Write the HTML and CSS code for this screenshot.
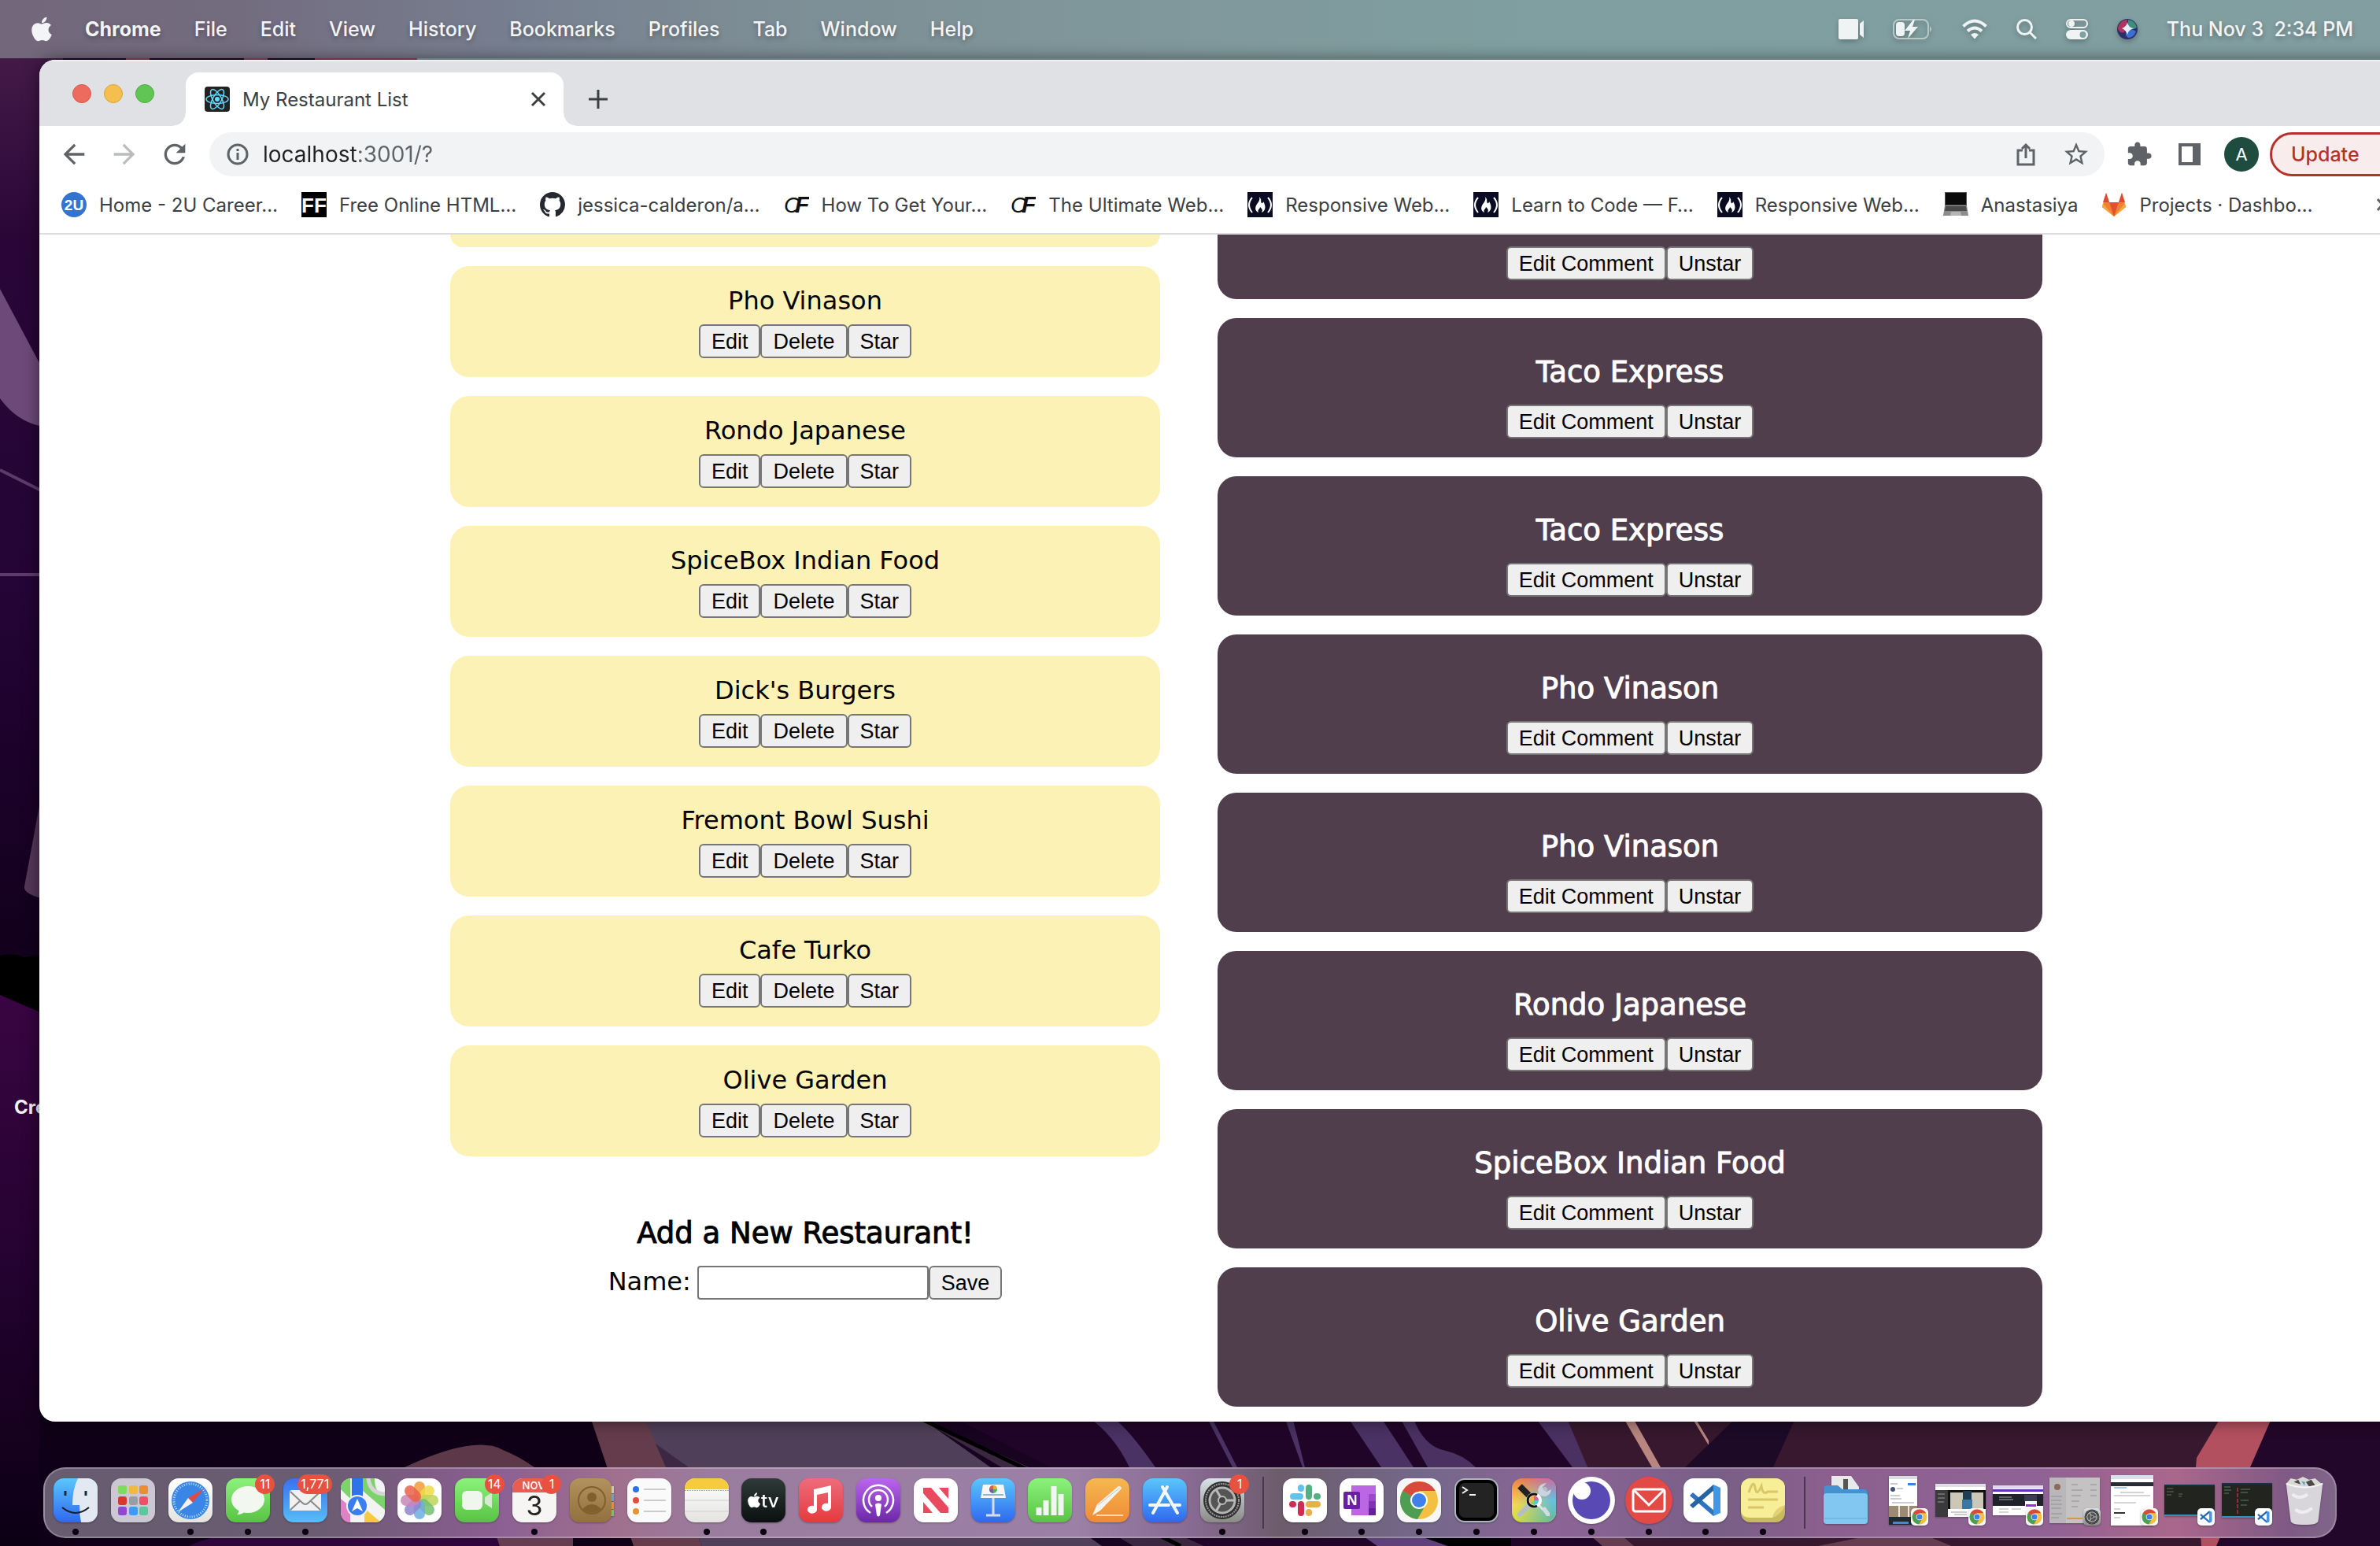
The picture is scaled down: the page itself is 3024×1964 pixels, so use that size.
FILE: index.html
```html
<!DOCTYPE html>
<html lang="en">
<head>
<meta charset="utf-8">
<title>My Restaurant List</title>
<link rel="stylesheet" href="styles.css">
</head>
<body>
<svg class="wallpaper" viewBox="0 0 3024 1964" preserveAspectRatio="none" aria-hidden="true">
  <defs>
    <linearGradient id="wl" x1="0" y1="0" x2="0" y2="1"><stop offset="0" stop-color="#431a47"/><stop offset=".2" stop-color="#2a0638"/><stop offset=".6" stop-color="#240436"/><stop offset="1" stop-color="#12001c"/></linearGradient>
    <linearGradient id="wg" x1="0" y1="0" x2="0" y2="1"><stop offset="0" stop-color="#390542"/><stop offset=".5" stop-color="#240230"/><stop offset="1" stop-color="#0c0014"/></linearGradient>
    <linearGradient id="blue" x1="0" y1="0" x2="0" y2="1"><stop offset="0" stop-color="#5bc6fb"/><stop offset="1" stop-color="#2f68ef"/></linearGradient>
    <linearGradient id="blueup" x1="0" y1="0" x2="0" y2="1"><stop offset="0" stop-color="#3a70ee"/><stop offset="1" stop-color="#57bdf8"/></linearGradient>
    <linearGradient id="green" x1="0" y1="0" x2="0" y2="1"><stop offset="0" stop-color="#8cf27c"/><stop offset="1" stop-color="#58c343"/></linearGradient>
    <linearGradient id="white" x1="0" y1="0" x2="0" y2="1"><stop offset="0" stop-color="#fff"/><stop offset="1" stop-color="#e4e3e0"/></linearGradient>
    <linearGradient id="red" x1="0" y1="0" x2="0" y2="1"><stop offset="0" stop-color="#ee6c7c"/><stop offset="1" stop-color="#e6393d"/></linearGradient>
    <linearGradient id="violet" x1="0" y1="0" x2="0" y2="1"><stop offset="0" stop-color="#bb66ec"/><stop offset="1" stop-color="#6c27a8"/></linearGradient>
    <linearGradient id="orange" x1="0" y1="0" x2="0" y2="1"><stop offset="0" stop-color="#f5b850"/><stop offset="1" stop-color="#f08a34"/></linearGradient>
    <linearGradient id="dark" x1="0" y1="0" x2="0" y2="1"><stop offset="0" stop-color="#2f3b38"/><stop offset="1" stop-color="#0b0f10"/></linearGradient>
    <linearGradient id="grey" x1="0" y1="0" x2="0" y2="1"><stop offset="0" stop-color="#d9e2e8"/><stop offset="1" stop-color="#8a8a86"/></linearGradient>
    <linearGradient id="brown" x1="0" y1="0" x2="0" y2="1"><stop offset="0" stop-color="#b2925d"/><stop offset="1" stop-color="#93703f"/></linearGradient>
    <linearGradient id="warm" x1="0" y1="0" x2="0" y2="1"><stop offset="0" stop-color="#ee8048"/><stop offset=".6" stop-color="#f4d84e"/><stop offset="1" stop-color="#c8dc48"/></linearGradient>
    <linearGradient id="cool" x1="0" y1="0" x2="0" y2="1"><stop offset="0" stop-color="#c86aa8"/><stop offset=".5" stop-color="#66c2dc"/><stop offset="1" stop-color="#6cb898"/></linearGradient>
    <linearGradient id="fade" x1="0" y1="0" x2="1" y2="0"><stop offset=".1" stop-color="#000"/><stop offset=".9" stop-color="#fff"/></linearGradient>
    <mask id="fade-mask"><rect width="56" height="56" fill="url(#fade)"/></mask>
    <symbol id="chrome-mark" viewBox="0 0 56 56">
      <rect width="56" height="56" rx="13" fill="#f7f7f7"/>
      <circle cx="28" cy="28" r="24" fill="#f3c044"/>
      <path d="M28 28 7.2 16A24 24 0 0 0 26 52l8-14z" fill="#4d9e53"/>
      <path d="M7.2 16a24 24 0 0 1 41.600 0H28v12z" fill="#d84b3c"/>
      <path d="M7.200 16 18 33l10-5z" fill="#4d9e53"/>
      <circle cx="28" cy="28" r="11" fill="#fff"/><circle cx="28" cy="28" r="9" fill="#4080ea"/>
    </symbol>
    <symbol id="code-mark" viewBox="0 0 56 56">
      <rect width="56" height="56" rx="13" fill="#fff"/>
      <path d="m8 22 4-4 28 24-2 6z" fill="#2f74c0"/><path d="m8 34 4 4 28-24-2-6z" fill="#2563a4"/>
      <path d="m38 8 9 4v32l-9 4z" fill="#4296e4"/>
    </symbol>
    <symbol id="gear-mark" viewBox="0 0 56 56">
      <rect width="56" height="56" rx="13" fill="url(#grey)"/>
      <circle cx="28" cy="28" r="24" fill="#303030"/>
      <circle cx="28" cy="28" r="21" fill="none" stroke="#999" stroke-width="2" stroke-dasharray="2 1"/>
      <circle cx="28" cy="28" r="16" fill="#555" stroke="#b5b5b5" stroke-width="3"/>
      <path d="M28 28h16M28 28l-8-14M28 28l-8 14" stroke="#bbb" stroke-width="3"/><circle cx="28" cy="28" r="5" fill="#444" stroke="#bbb" stroke-width="2"/>
    </symbol>
    <symbol id="camp-mark" viewBox="0 0 32 32">
      <rect width="32" height="32" fill="#0a0a23"/>
      <path d="M6 7q-8 9 0 19M26 7q8 9 0 19" fill="none" stroke="#fff" stroke-width="2"/>
      <path d="M15 6c4 4 1 6 3 8 1 1 2-1 2-2 4 6 3 12-2 14 2-4 0-5-2-7 0 3-4 3-2 7-6-3-4-8-1-12 2-3 3-5 2-8z" fill="#fff"/>
    </symbol>
  </defs>
  <rect width="3024" height="1964" fill="#180320"/>
  <rect y="74" width="80" height="1140" fill="url(#wl)"/>
  <path d="M0 367 50 461 80 500V541H50Q20 534 0 506z" fill="#6d4979"/>
  <path d="M0 597 60 627M0 730H60" stroke="#5f3b6c" stroke-width="4"/>
  <path d="M60 970 31 1126q-2 10 29 17z" fill="#54385a"/>
  <path d="M0 1214q20-4 30 2 15-4 40 0v80L0 1265z" fill="#000"/>
  <path d="M0 1264 70 1294V1964H0z" fill="url(#wg)"/>
  <path d="M400 74h130v4H400zM160 74h30v4h-30zM310 74h30v4h-30z" fill="#8b4558"/>
  <path d="M530 74H3024v4H530z" fill="#8aa6a8"/>
  <path d="M50 1790h800v174H50z" fill="#100017"/>
  <path d="M514 1864q90-42 125-22 20 8 40 22z" fill="#5d3848"/>
  <path d="M750 1800h70l72 164H805z" fill="#653c4b"/>
  <path d="M818 1800h350L1400 1964H892z" fill="#503f58"/>
  <path d="M833 1834 875 1864H846z" fill="#3c2844"/>
  <path d="M1165 1800 1530 1964H1440z" fill="#3b273f"/>
  <path d="M1165 1800 1299 1864 1500 1964" fill="none" stroke="#000" stroke-width="5"/>
  <path d="M1210 1800H2000L2100 1964H1530z" fill="#210529"/>
  <path d="M1382 1800h30q20 12 56 64h-33q-20-42-53-64zM1533 1800h6l33 64h-6zM1632 1800h10l16 64h-3zM1712 1800h42l42 64h-41z" fill="#4a3264"/>
  <path d="M1778 1800h17q14 38 42 43 22 5 38 21h-61zM1950 1800h38l52 64h-42z" fill="#4a3162"/>
  <path d="M1990 1800H2830L2820 1964H2060z" fill="#37182f"/>
  <path d="M2062 1800h12l36 64h-11zM2149 1800h4l18 30v6z" fill="#b8857f"/>
  <path d="M2207 1800h75l-29 64h-112z" fill="#1d0a26"/>
  <path d="M2822 1800H3024V1964H2800z" fill="#22072a"/>
  <path d="M2822 1800h65l-28 64-43 100h-19l-7-100 1-12z" fill="#b3505f"/>
  <path d="M240 1964q20-10 40-12h355v12z" fill="#2e063c"/><path d="M630 1950h98v14h-93zM2020 1950h40l16 14h-40zM2310 1964l60-12h80l30 12z" fill="#643e50"/>
  <path d="M1730 1950h70l40 14h-90z" fill="#60407a"/><path d="M1800 1950h120v14h-80z" fill="#000"/>
</svg>
<p class="desktop-label">Cre</p>

<header class="menubar">
  <nav class="menus">
    <svg class="apple" viewBox="0 28 384 456" fill="currentColor"><path d="M318.700 268.700c-.2-36.700 16.400-64.400 50-84.800-18.800-26.900-47.200-41.700-84.700-44.600-35.500-2.800-74.300 20.700-88.500 20.700-15 0-49.400-19.700-76.400-19.700C63.300 141.200 4 184.800 4 273.500q0 39.300 14.400 81.200c12.800 36.700 59 126.700 107.200 125.200 25.200-.6 43-17.900 75.800-17.900 31.800 0 48.300 17.900 76.400 17.900 48.600-.7 90.400-82.500 102.600-119.300-65.200-30.700-61.700-90-61.700-91.900zm-56.600-164.200c27.300-32.400 24.800-61.900 24-72.500-24.100 1.400-52 16.400-67.900 34.900-17.500 19.800-27.800 44.300-25.600 71.900 26.100 2 49.900-11.400 69.500-34.300z"/></svg>
    <button class="menu menu-app">Chrome</button>
    <button class="menu">File</button>
    <button class="menu">Edit</button>
    <button class="menu">View</button>
    <button class="menu">History</button>
    <button class="menu">Bookmarks</button>
    <button class="menu">Profiles</button>
    <button class="menu">Tab</button>
    <button class="menu">Window</button>
    <button class="menu">Help</button>
  </nav>
  <div class="status">
    <svg width="32" height="26" viewBox="0 0 32 26" fill="#f0f3f3"><rect width="25" height="26" rx="2"/><path d="M27 6l5-4v22l-5-4z"/></svg>
    <svg width="51" height="26" viewBox="0 0 51 26"><rect x="1" y="1" width="44" height="24" rx="7" fill="none" stroke="#b9c8c9" stroke-width="2"/><path d="M47 9q4 4 0 8z" fill="#b9c8c9"/><rect x="4" y="4" width="11" height="18" rx="4" fill="#f0f3f3"/><path d="M26 1 15 15h7l-3 10 13-15h-7l3-9z" fill="#f0f3f3"/></svg>
    <svg width="32" height="26" viewBox="0 0 32 26" fill="none" stroke="#f0f3f3" stroke-width="4"><path d="M1.500 9.500q14.500-14 29 0M7 15.500q9-8 18 0"/><path d="M11 20q5-4 10 0l-5 5.500z" fill="#f0f3f3" stroke="none"/></svg>
    <svg width="26" height="26" viewBox="0 0 26 26" fill="none" stroke="#f0f3f3" stroke-width="3"><circle cx="10.500" cy="10.500" r="9"/><path d="m17 17 8 8"/></svg>
    <svg width="28" height="26" viewBox="0 0 28 26"><rect x="1" y="1" width="26" height="10" rx="5" fill="none" stroke="#f0f3f3" stroke-width="2"/><circle cx="7" cy="6" r="4" fill="#f0f3f3"/><rect y="14" width="28" height="12" rx="6" fill="#f0f3f3"/><circle cx="21.500" cy="20" r="4" fill="#7f9fa0"/></svg>
    <svg width="26" height="26" viewBox="0 0 26 26"><circle cx="13" cy="13" r="13" fill="#2a2f6a"/><path d="M1 12A12 12 0 0 1 13 1q-1 9-4 16-6 2-8-5z" fill="#b0345e"/><path d="M14 1a12 12 0 0 1 11 10q-6 4-11 2z" fill="#3f8d7c"/><path d="M14 14q7-1 10 2-3 8-10 8-6-4 0-10z" fill="#3d6fd0"/><path d="M13 4q1 7 8 8-7 2-8 8-2-6-7-8 6-2 7-8z" fill="#e6eefa"/></svg>
    <time class="clock">Thu Nov 3&nbsp; 2:34 PM</time>
  </div>
</header>

<main class="window">
  <div class="tabstrip">
    <div class="lights"><span class="light light-close"></span><span class="light light-min"></span><span class="light light-max"></span></div>
    <div class="tab">
      <svg width="32" height="32" viewBox="0 0 32 32"><rect width="32" height="32" rx="4" fill="#222"/><g fill="none" stroke="#61dafb" stroke-width="1.500"><ellipse cx="16" cy="16" rx="14" ry="5.500"/><ellipse cx="16" cy="16" rx="14" ry="5.500" transform="rotate(60 16 16)"/><ellipse cx="16" cy="16" rx="14" ry="5.500" transform="rotate(120 16 16)"/></g><circle cx="16" cy="16" r="3" fill="#61dafb"/></svg>
      <span class="tab-title">My Restaurant List</span>
      <button class="icon-button tab-close" aria-label="Close tab"><svg width="24" height="24" viewBox="0 0 24 24" stroke="#3c4043" stroke-width="3"><path d="m4 4 16 16M20 4 4 20"/></svg></button>
    </div>
    <button class="icon-button new-tab" aria-label="New tab"><svg width="24" height="24" viewBox="0 0 24 24" stroke="#3c4043" stroke-width="3"><path d="M12 0v24M0 12h24"/></svg></button>
    <button class="icon-button tab-search" aria-label="Search tabs"><svg width="24" height="24" viewBox="0 0 24 24" fill="none" stroke="#3c4043" stroke-width="4"><path d="m3 8 9 9 9-9"/></svg></button>
  </div>

  <div class="toolbar">
    <button class="icon-button" aria-label="Back"><svg width="40" height="40" viewBox="0 0 24 24" fill="#5f6368"><path d="M20 11H7.830l5.590-5.590L12 4l-8 8 8 8 1.410-1.410L7.830 13H20v-2z"/></svg></button>
    <button class="icon-button" aria-label="Forward"><svg width="40" height="40" viewBox="0 0 24 24" fill="#babcbe"><path d="M4 11h12.170l-5.590-5.590L12 4l8 8-8 8-1.410-1.410L16.170 13H4v-2z"/></svg></button>
    <button class="icon-button" aria-label="Reload"><svg width="40" height="40" viewBox="0 0 24 24" fill="#5f6368"><path d="M17.650 6.350C16.200 4.900 14.210 4 12 4c-4.420 0-7.990 3.580-7.990 8s3.570 8 7.990 8c3.730 0 6.840-2.550 7.730-6h-2.080c-.82 2.330-3.040 4-5.650 4-3.310 0-6-2.690-6-6s2.690-6 6-6c1.660 0 3.140.69 4.220 1.780L13 11h7V4l-2.350 2.350z"/></svg></button>
    <div class="omnibox">
      <svg width="28" height="28" viewBox="0 0 28 28" fill="none" stroke="#5f6368" stroke-width="3"><circle cx="14" cy="14" r="12"/><path d="M14 12v9M14 7v3"/></svg>
      <input class="address" type="text" value="localhost:3001/?" aria-label="Address">
      <svg width="24" height="30" viewBox="0 0 24 30" fill="none" stroke="#5f6368" stroke-width="3"><path d="M8 10H2v18h20V10h-6M12 20V3M7 8l5-5 5 5"/></svg>
      <svg width="36" height="36" viewBox="0 0 24 24" fill="#5f6368"><path d="M22 9.240l-7.190-.62L12 2 9.190 8.630 2 9.240l5.460 4.730L5.820 21 12 17.270 18.180 21l-1.630-7.030L22 9.240zM12 15.400l-3.760 2.270 1-4.280-3.320-2.880 4.380-.38L12 6.100l1.710 4.040 4.380.38-3.320 2.880 1 4.280L12 15.400z"/></svg>
    </div>
    <button class="icon-button" aria-label="Extensions"><svg width="34" height="34" viewBox="0 0 24 24" fill="#5f6368"><path d="M20.500 11H19V7c0-1.100-.9-2-2-2h-4V3.500C13 2.120 11.880 1 10.500 1S8 2.120 8 3.500V5H4c-1.100 0-1.990.9-1.990 2v3.800H3.500c1.490 0 2.700 1.210 2.700 2.700s-1.210 2.700-2.700 2.700H2V20c0 1.100.9 2 2 2h3.800v-1.500c0-1.490 1.210-2.700 2.700-2.700 1.490 0 2.700 1.210 2.700 2.700V22H17c1.100 0 2-.9 2-2v-4h1.500c1.380 0 2.500-1.120 2.500-2.500S21.880 11 20.500 11z"/></svg></button>
    <button class="icon-button" aria-label="Side panel"><svg width="28" height="28" viewBox="0 0 28 28"><path d="M0 0h28v28H0zM4 4v20h14V4z" fill="#5f6368" fill-rule="evenodd"/></svg></button>
    <div class="account">
      <span class="avatar">A</span>
      <button class="update">Update</button>
    </div>
  </div>

  <nav class="bookmarks">
    <a class="bookmark" href="#"><svg width="32" height="32" viewBox="0 0 32 32"><circle cx="16" cy="16" r="16" fill="#3374d0"/><text x="16" y="23" text-anchor="middle" class="mark-2u">2U</text></svg>Home - 2U Career…</a>
    <a class="bookmark" href="#"><svg width="32" height="32" viewBox="0 0 32 32"><rect width="32" height="32" fill="#000"/><text x="16" y="26" text-anchor="middle" class="mark-ff">FF</text></svg>Free Online HTML…</a>
    <a class="bookmark" href="#"><svg width="32" height="32" viewBox="0 0 16 16" fill="#24292f"><path d="M8 0C3.580 0 0 3.580 0 8c0 3.540 2.290 6.530 5.470 7.590.4.070.55-.17.55-.38 0-.19-.01-.82-.01-1.490-2.010.37-2.530-.49-2.690-.94-.09-.23-.48-.94-.82-1.130-.28-.15-.68-.52-.01-.53.63-.01 1.080.58 1.230.82.72 1.210 1.870.87 2.330.66.070-.52.28-.87.51-1.070-1.780-.2-3.640-.89-3.640-3.950 0-.87.31-1.590.82-2.150-.08-.2-.36-1.020.08-2.120 0 0 .67-.21 2.200.82.64-.18 1.320-.27 2-.27s1.360.09 2 .27c1.530-1.040 2.200-.82 2.200-.82.44 1.100.16 1.920.08 2.120.51.56.82 1.270.82 2.150 0 3.070-1.870 3.750-3.650 3.950.29.25.54.73.54 1.480 0 1.070-.01 1.930-.01 2.200 0 .21.15.46.55.38A8.010 8.010 0 0 0 16 8c0-4.420-3.580-8-8-8z"/></svg>jessica-calderon/a…</a>
    <a class="bookmark" href="#"><svg width="32" height="32" viewBox="0 0 32 32"><text x="0" y="26" class="mark-c">C</text><text x="14" y="26" class="mark-f">F</text></svg>How To Get Your…</a>
    <a class="bookmark" href="#"><svg width="32" height="32" viewBox="0 0 32 32"><text x="0" y="26" class="mark-c">C</text><text x="14" y="26" class="mark-f">F</text></svg>The Ultimate Web…</a>
    <a class="bookmark" href="#"><svg width="32" height="32"><use href="#camp-mark"/></svg>Responsive Web…</a>
    <a class="bookmark" href="#"><svg width="32" height="32"><use href="#camp-mark"/></svg>Learn to Code — F…</a>
    <a class="bookmark" href="#"><svg width="32" height="32"><use href="#camp-mark"/></svg>Responsive Web…</a>
    <a class="bookmark" href="#"><svg width="32" height="32" viewBox="0 0 32 32"><path d="M2 0h28v17H2z" fill="#555"/><path d="M3 1h26v15H3z" fill="#0a0a0a"/><path d="M2 17h28l2 13H0z" fill="#8c8c8c"/><path d="M3 18h26l1 6H2z" fill="#4a4a4a"/><path d="M10 25h12l1 5H9z" fill="#b4b4b4"/></svg>Anastasiya</a>
    <a class="bookmark" href="#"><svg width="32" height="32" viewBox="0 0 32 32"><path d="M16 31 1 19 6 1l4 12h12L26 1l5 18z" fill="#ef8034"/><path d="m16 31-6-18h12z" fill="#e2502f"/><path d="M6 1l4 12H2zM26 1l-4 12h8z" fill="#dd4b33"/><path d="M16 31 1 19l1-5zM16 31l15-12-1-5z" fill="#f3a63b"/></svg>Projects · Dashbo…</a>
    <button class="icon-button more" aria-label="More bookmarks"><svg width="16" height="20" viewBox="0 0 16 20" fill="none" stroke="#5f6368" stroke-width="3"><path d="m1 3 6 7-6 7M8 3l6 7-6 7"/></svg></button>
  </nav>

  <div class="page">
    <section class="column">
      <div class="card card-tail"></div>
      <article class="card"><p class="name">Pho Vinason</p><div class="actions"><button class="btn">Edit</button><button class="btn">Delete</button><button class="btn">Star</button></div></article>
      <article class="card"><p class="name">Rondo Japanese</p><div class="actions"><button class="btn">Edit</button><button class="btn">Delete</button><button class="btn">Star</button></div></article>
      <article class="card"><p class="name">SpiceBox Indian Food</p><div class="actions"><button class="btn">Edit</button><button class="btn">Delete</button><button class="btn">Star</button></div></article>
      <article class="card"><p class="name">Dick's Burgers</p><div class="actions"><button class="btn">Edit</button><button class="btn">Delete</button><button class="btn">Star</button></div></article>
      <article class="card"><p class="name">Fremont Bowl Sushi</p><div class="actions"><button class="btn">Edit</button><button class="btn">Delete</button><button class="btn">Star</button></div></article>
      <article class="card"><p class="name">Cafe Turko</p><div class="actions"><button class="btn">Edit</button><button class="btn">Delete</button><button class="btn">Star</button></div></article>
      <article class="card"><p class="name">Olive Garden</p><div class="actions"><button class="btn">Edit</button><button class="btn">Delete</button><button class="btn">Star</button></div></article>
      <form class="add">
        <h3 class="heading">Add a New Restaurant!</h3>
        <div class="field"><label for="name">Name:</label><input class="textbox" id="name" type="text"><button class="btn" type="button">Save</button></div>
      </form>
    </section>
    <section class="column">
      <article class="card starred starred-tail"><div class="actions"><button class="btn">Edit Comment</button><button class="btn">Unstar</button></div></article>
      <article class="card starred"><h3 class="heading">Taco Express</h3><div class="actions"><button class="btn">Edit Comment</button><button class="btn">Unstar</button></div></article>
      <article class="card starred"><h3 class="heading">Taco Express</h3><div class="actions"><button class="btn">Edit Comment</button><button class="btn">Unstar</button></div></article>
      <article class="card starred"><h3 class="heading">Pho Vinason</h3><div class="actions"><button class="btn">Edit Comment</button><button class="btn">Unstar</button></div></article>
      <article class="card starred"><h3 class="heading">Pho Vinason</h3><div class="actions"><button class="btn">Edit Comment</button><button class="btn">Unstar</button></div></article>
      <article class="card starred"><h3 class="heading">Rondo Japanese</h3><div class="actions"><button class="btn">Edit Comment</button><button class="btn">Unstar</button></div></article>
      <article class="card starred"><h3 class="heading">SpiceBox Indian Food</h3><div class="actions"><button class="btn">Edit Comment</button><button class="btn">Unstar</button></div></article>
      <article class="card starred"><h3 class="heading">Olive Garden</h3><div class="actions"><button class="btn">Edit Comment</button><button class="btn">Unstar</button></div></article>
    </section>
  </div>
</main>

<footer class="dock">
  <div class="apps apps-main">
    <div class="app open"><svg viewBox="0 0 56 56"><rect width="56" height="56" rx="13" fill="url(#blue)"/><path d="M31 0h12a13 13 0 0 1 13 13v30a13 13 0 0 1-13 13h-8q-2-10-2-22h-9Q24 14 31 0z" fill="#e3e9f2"/><path d="M15 16v6M41 16v6" stroke="#1b2a3a" stroke-width="3"/><path d="M11 37q17 14 34 0" fill="none" stroke="#1b1b22" stroke-width="2"/></svg></div>
    <div class="app"><svg viewBox="0 0 56 56"><rect width="56" height="56" rx="13" fill="#cbc7d3"/><rect x="9" y="9" width="11" height="11" rx="3" fill="#7fdb5f"/><rect x="23" y="9" width="11" height="11" rx="3" fill="#f3b93c"/><rect x="36" y="9" width="11" height="11" rx="3" fill="#ea8d34"/><rect x="9" y="23" width="11" height="11" rx="3" fill="#d8372c"/><rect x="23" y="23" width="11" height="11" rx="3" fill="#9a9ea2"/><rect x="36" y="23" width="11" height="11" rx="3" fill="#ef5068"/><rect x="9" y="36" width="11" height="11" rx="3" fill="#9148cc"/><rect x="23" y="36" width="11" height="11" rx="3" fill="#3a9cf2"/><rect x="36" y="36" width="11" height="11" rx="3" fill="#5cc79a"/></svg></div>
    <div class="app open"><svg viewBox="0 0 56 56"><rect width="56" height="56" rx="13" fill="url(#white)"/><circle cx="28" cy="28" r="24" fill="#3a86e6"/><circle cx="28" cy="28" r="21" fill="none" stroke="#bfe0fb" stroke-width="3" stroke-dasharray="1 2"/><path d="M45 13 31 31l-6-6z" fill="#e5483c"/><path d="M12 43 25 25l6 6z" fill="#f3f3f3"/></svg></div>
    <div class="app open"><svg viewBox="0 0 56 56"><rect width="56" height="56" rx="13" fill="url(#green)"/><ellipse cx="28" cy="27" rx="21" ry="17" fill="#f2f8f0"/><path d="M17 38q0 6-3 8 8 0 11-5z" fill="#f2f8f0"/></svg><span class="badge">11</span></div>
    <div class="app open"><svg viewBox="0 0 56 56"><rect width="56" height="56" rx="13" fill="url(#blueup)"/><rect x="8" y="15" width="40" height="26" rx="3" fill="#f1f1f1"/><path d="m9 17 15 14q4 4 8 0l15-14M9 40l13-12M47 40 34 28" fill="none" stroke="#8a8a8a" stroke-width="2"/></svg><span class="badge">1,771</span></div>
    <div class="app"><svg viewBox="0 0 56 56"><rect width="56" height="56" rx="13" fill="#f3f3f3"/><path d="M0 13A13 13 0 0 1 12 0v26L0 14zM28 0h15q0 20 13 22v18L28 16z" fill="#7cd36c"/><path d="M0 26l12 10v20Q1 56 0 43z" fill="#df82c4"/><path d="M14 0h14v30H14z" fill="#2f73e8"/><path d="M30 38 50 55q-4 1-8 1H30z" fill="#f6c944"/><path d="M35 0q2 19 21 20" fill="none" stroke="#d5d5d5" stroke-width="5"/><circle cx="21" cy="35" r="14" fill="#f3f3f3"/><circle cx="21" cy="35" r="12" fill="#3a7df0"/><path d="m21 26 7 16-7-4-7 4z" fill="#fff"/></svg></div>
    <div class="app"><svg viewBox="0 0 56 56"><rect width="56" height="56" rx="13" fill="#fff"/><g fill-opacity=".85"><rect x="21" y="4" width="14" height="24" rx="7" fill="#f19a37"/><rect x="21" y="4" width="14" height="24" rx="7" fill="#efdc45" transform="rotate(45 28 28)"/><rect x="21" y="4" width="14" height="24" rx="7" fill="#bcd65a" transform="rotate(90 28 28)"/><rect x="21" y="4" width="14" height="24" rx="7" fill="#74bf70" transform="rotate(135 28 28)"/><rect x="21" y="4" width="14" height="24" rx="7" fill="#6daee0" transform="rotate(180 28 28)"/><rect x="21" y="4" width="14" height="24" rx="7" fill="#8d86cf" transform="rotate(225 28 28)"/><rect x="21" y="4" width="14" height="24" rx="7" fill="#c985b8" transform="rotate(270 28 28)"/><rect x="21" y="4" width="14" height="24" rx="7" fill="#ea604a" transform="rotate(315 28 28)"/></g></svg></div>
    <div class="app"><svg viewBox="0 0 56 56"><rect width="56" height="56" rx="13" fill="url(#green)"/><rect x="9" y="16" width="26" height="24" rx="6" fill="#eff7ed"/><path d="M38 24l9-6v20l-9-6z" fill="#d5ebd0"/></svg><span class="badge">14</span></div>
    <div class="app open"><svg viewBox="0 0 56 56"><rect width="56" height="56" rx="13" fill="#f6f5f3"/><path d="M0 18v-5A13 13 0 0 1 13 0h30a13 13 0 0 1 13 13v5z" fill="#e75d52"/><text x="27" y="14" text-anchor="middle" class="cal-month">NOV</text><text x="28" y="47" text-anchor="middle" class="cal-day">3</text></svg><span class="badge">1</span></div>
    <div class="app"><svg viewBox="0 0 56 56"><path d="M50 10h6v9h-6z" fill="#c9c5b8"/><path d="M50 20h6v9h-6z" fill="#55a7dc"/><path d="M50 30h6v9h-6z" fill="#e98b35"/><path d="M50 40h6v8h-6z" fill="#6cc85e"/><rect width="53" height="56" rx="12" fill="url(#brown)"/><circle cx="28" cy="28" r="17" fill="none" stroke="#80602f" stroke-width="2"/><circle cx="28" cy="24" r="6" fill="#80602f"/><path d="M16 39q12-12 24 0-12 10-24 0z" fill="#80602f"/></svg></div>
    <div class="app"><svg viewBox="0 0 56 56"><rect width="56" height="56" rx="13" fill="#fbfafa"/><path d="M21 14h28M21 28h28M21 42h28" stroke="#bdbdbd" stroke-width="1.500"/><circle cx="11" cy="14" r="4" fill="#2f6fe8"/><circle cx="11" cy="28" r="4" fill="#e64a3c"/><circle cx="11" cy="42" r="4" fill="#e99432"/></svg></div>
    <div class="app open"><svg viewBox="0 0 56 56"><rect width="56" height="56" rx="13" fill="url(#white)"/><path d="M0 14v-1A13 13 0 0 1 13 0h30a13 13 0 0 1 13 13v1z" fill="#f7cb3e"/><path d="M0 15.500h56" stroke="#b5b1a5" stroke-dasharray="2 1"/><path d="M0 28h56M0 42h56" stroke="#d2d0ca"/></svg></div>
    <div class="app open"><svg viewBox="0 0 56 56"><rect width="56" height="56" rx="13" fill="url(#dark)"/><path transform="translate(8 17) scale(.042)" d="M318.700 268.700c-.2-36.700 16.400-64.400 50-84.800-18.800-26.900-47.200-41.700-84.700-44.600-35.500-2.800-74.300 20.700-88.500 20.700-15 0-49.400-19.700-76.400-19.700C63.300 141.200 4 184.800 4 273.500q0 39.300 14.400 81.200c12.800 36.700 59 126.700 107.200 125.200 25.200-.6 43-17.900 75.800-17.900 31.800 0 48.300 17.900 76.400 17.900 48.600-.7 90.400-82.500 102.600-119.300-65.200-30.700-61.700-90-61.700-91.900zm-56.600-164.200c27.300-32.400 24.800-61.900 24-72.500-24.100 1.400-52 16.400-67.900 34.900-17.500 19.800-27.800 44.300-25.600 71.900 26.100 2 49.900-11.400 69.500-34.300z" fill="#fff"/><text x="25" y="37" class="tv-text">tv</text></svg></div>
    <div class="app"><svg viewBox="0 0 56 56"><rect width="56" height="56" rx="13" fill="url(#red)"/><path d="M19 14 41 9v28a6 5 0 1 1-4-5V18l-14 3v19a6 5 0 1 1-4-5z" fill="#fff"/></svg></div>
    <div class="app"><svg viewBox="0 0 56 56"><rect width="56" height="56" rx="13" fill="url(#violet)"/><g fill="none" stroke="#fff" stroke-width="2.500"><path d="M18 44a19 19 0 1 1 20 0M20 36a12 12 0 1 1 16 0"/></g><circle cx="28" cy="25" r="4" fill="#fff"/><path d="M24 33q4-3 8 0l-2 14q-2 3-4 0z" fill="#fff"/></svg></div>
    <div class="app"><svg viewBox="0 0 56 56"><rect width="56" height="56" rx="13" fill="#fff"/><path d="M12 12h10l22 25v7H34L12 19zM32 12h12v14zM12 30v14h12z" fill="#e94a5f"/></svg></div>
    <div class="app"><svg viewBox="0 0 56 56"><rect width="56" height="56" rx="13" fill="url(#blue)"/><path d="M15 8h26l3 17H12z" fill="#f4f6f8"/><path d="M28 25v22M19 47h18" stroke="#d7dde5" stroke-width="3"/><path d="M15 21h26" stroke="#9db4c8" stroke-width="2"/><circle cx="28" cy="14" r="5" fill="#56b05a"/><path d="M28 14V9a5 5 0 0 0-5 5z" fill="#e9544c"/><path d="M28 14v5a5 5 0 0 1-5-5z" fill="#8a4bbf"/><path d="M28 14V9a5 5 0 0 1 5 5z" fill="#f0a63a"/></svg></div>
    <div class="app"><svg viewBox="0 0 56 56"><rect width="56" height="56" rx="13" fill="url(#green)"/><path d="M14 47V37M23 47V28M33 47V10M42 47V20" stroke="#f2f6f0" stroke-width="7"/></svg></div>
    <div class="app"><svg viewBox="0 0 56 56"><rect width="56" height="56" rx="13" fill="url(#orange)"/><path d="m9 47 6-14L42 10q4 0 4 3L19 41z" fill="#f5f3ef"/><path d="M16 34 44 12" stroke="#c9c5bd"/><path d="M14 47h34" stroke="#fbd8a8" stroke-width="2"/></svg></div>
    <div class="app"><svg viewBox="0 0 56 56"><rect width="56" height="56" rx="13" fill="url(#blue)"/><path d="m25 11 19 33M31 11 13 44M9 34h24M39 34h8" stroke="#f4f7fb" stroke-width="4" stroke-linecap="round"/></svg></div>
    <div class="app open"><svg><use href="#gear-mark"/></svg><span class="badge">1</span></div>
  </div>
  <span class="divider"></span>
  <div class="apps">
    <div class="app open"><svg viewBox="0 0 56 56"><rect width="56" height="56" rx="13" fill="#fff"/><g stroke-width="8" stroke-linecap="round"><path d="M13 23h9M23 12v1" stroke="#62c3ea"/><path d="M33 12v11M43 23h1" stroke="#54b082"/><path d="M33 33h11M33 43v1" stroke="#e3b349"/><path d="M23 33v11M12 33h1" stroke="#d02c56"/></g></svg></div>
    <div class="app open"><svg viewBox="0 0 56 56"><rect width="56" height="56" rx="13" fill="#fff"/><path d="M15 9h31v38H15z" fill="#bb66e2"/><path d="M37 20h9v9h-9z" fill="#9b48cc"/><path d="M37 29h9v9h-9z" fill="#7e32b4"/><path d="M37 38h9v9h-9z" fill="#66209a"/><rect x="5" y="17" width="21" height="22" rx="2" fill="#6a1fa5"/><text x="16" y="34" text-anchor="middle" class="note-text">N</text></svg></div>
    <div class="app open"><svg><use href="#chrome-mark"/></svg></div>
    <div class="app open"><svg viewBox="0 0 56 56"><rect width="56" height="56" rx="13" fill="#a9b6bd"/><rect x="2" y="2" width="52" height="52" rx="11" fill="#000"/><rect x="6" y="6" width="44" height="44" rx="7" fill="#232323"/><path d="m10 11 6 4-6 4M19 21h8" fill="none" stroke="#f3f3f3" stroke-width="2"/></svg></div>
    <div class="app open"><svg viewBox="0 0 56 56"><rect width="56" height="56" rx="13" fill="url(#warm)"/><rect width="56" height="56" rx="13" fill="url(#cool)" mask="url(#fade-mask)"/><path d="m10 10 15 15" stroke="#222" stroke-width="8"/><path d="m42 14-32 32" stroke="#b3bfc8" stroke-width="6" stroke-linecap="round"/><path d="m32 32 10 10" stroke="#dfe4e8" stroke-width="3"/><path d="m38 39 4-3 6 8v4h-4z" fill="#d3dce2"/><path d="M44 6q-10 1-11 9 1 8 9 8 7-1 8-9l-6 3-4-2-1-4z" fill="#c9d4dc"/><circle cx="28" cy="28" r="10" fill="#fff"/><path d="M28 28v-6a6 6 0 0 1 6 6z" fill="#e85a9a"/><path d="M28 28h6a6 6 0 0 1-6 6z" fill="#5cc2de"/><path d="M28 28v6a6 6 0 0 1-5-3z" fill="#8cd060"/><path d="M28 28l-5 3a6 6 0 0 1 5-9z" fill="#f0b04a"/><path d="M32 21a8 8 0 1 0 0 14" fill="none" stroke="#111" stroke-width="3"/></svg></div>
    <div class="app app-round open"><svg viewBox="0 0 60 60"><circle cx="30" cy="30" r="30" fill="#fff"/><circle cx="30" cy="30" r="24" fill="#5849b5"/><circle cx="18" cy="18" r="11" fill="#fff"/></svg></div>
    <div class="app app-round open"><svg viewBox="0 0 60 60"><circle cx="30" cy="30" r="30" fill="#e34a45"/><g fill="none" stroke="#fff" stroke-width="3"><rect x="10" y="16" width="40" height="28" rx="3"/><path d="m11 17 19 19 19-19"/></g></svg></div>
    <div class="app open"><svg><use href="#code-mark"/></svg></div>
    <div class="app open"><svg viewBox="0 0 56 56"><rect width="56" height="56" rx="12" fill="#c9b95f"/><path d="M0 12A12 12 0 0 1 12 0h32a12 12 0 0 1 12 12v22L40 50H12Q0 50 0 40z" fill="#f8ee98"/><path d="M40 50q2-12 16-16-4 12-16 16z" fill="#e2d175"/><path d="M10 18q6-18 8-6t8-2q2 12 8 7h13M9 27h38M9 37h20" fill="none" stroke="#d8c766" stroke-width="3"/></svg></div>
  </div>
  <span class="divider"></span>
  <div class="apps">
    <div class="app"><svg viewBox="0 0 56 62" class="tall"><path d="M10 0h25l10 14v10H10z" fill="#e9e9e9"/><path d="M25 4h6v16h-6z" fill="#555"/><path d="M0 16q0-4 4-4h14l6 5h28q4 0 4 5v10H0z" fill="#4591cf"/><rect y="22" width="56" height="39" rx="4" fill="#82c6f2"/><path d="M1 54h54" stroke="#67abd9"/></svg></div>
    <div class="app mini"><svg width="36" height="62" viewBox="0 0 36 62"><path d="M0 0h36v62H0z" fill="#fff"/><path d="M0 0h36v4H0z" fill="#dcdde0"/><path d="M24 9h10v3H24z" fill="#3b82e6"/><circle cx="5" cy="17" r="3" fill="#45527a"/><path d="M2 10h9M10 16h8M2 25h12M2 29h14M4 34h28" stroke="#999"/><path d="M0 38h36v14H0z" fill="#9d8a72"/><path d="M12 38h2v14h-2zM24 38h2v14h-2z" fill="#e9e3d8"/><path d="M0 52h36v10H0z" fill="#1f2a30"/><path d="M5 58h20v3H5z" fill="#3c8adf"/></svg><svg class="mini-mark"><use href="#chrome-mark"/></svg></div>
    <div class="app mini"><svg width="64" height="60" viewBox="0 -9 64 60"><path d="M0 0h64v42H0z" fill="#fff"/><path d="M0 0h64v4H0z" fill="#dddfe3"/><path d="M0 8h16v34H0z" fill="#3a3a3d"/><path d="M16 8h48v24H16z" fill="#111"/><path d="M19 11h42v21H19z" fill="#cdc7b8"/><path d="M35 9h11v11H35z" fill="#1d3f55"/><path d="M34 20h13v12H34z" fill="#3b77a5"/><path d="M3 13h9M3 18h9M3 23h8M20 36h20M24 39h16" stroke="#999"/></svg><svg class="mini-mark"><use href="#chrome-mark"/></svg></div>
    <div class="app mini"><svg width="64" height="38" viewBox="0 0 64 38"><path d="M0 0h64v38H0z" fill="#fff"/><path d="M0 0h64v4H0z" fill="#e2d8ee"/><path d="M0 5h64v3H0z" fill="#6331b5"/><path d="M0 11h64v15H0z" fill="#20222b"/><path d="M40 12h16v8H40z" fill="#3c3d55"/><path d="M41 20h15v12H41z" fill="#fff"/><path d="M42 24h13v3H42z" fill="#9232db"/><path d="M8 15h16M8 18h18M8 30h12M24 30h12M8 34h12" stroke="#aaa"/></svg><svg class="mini-mark"><use href="#chrome-mark"/></svg></div>
    <div class="app mini"><svg width="64" height="58" viewBox="0 0 64 58"><path d="M0 0h64v58H0z" fill="#b9b7b9"/><path d="M21 0h43v58H21z" fill="#c4c2c3"/><circle cx="10" cy="12" r="4" fill="#8b6a5a"/><path d="M2 24h14M2 29h13M2 34h14M2 39h13M2 46h14M2 51h10M28 9h8M28 16h14M28 23h12M28 30h10M28 37h8M52 9h8M52 16h8M52 23h8" stroke="#918f92"/><path d="M22 52h20" stroke="#cf9a50" stroke-width="2"/></svg><svg class="mini-mark"><use href="#gear-mark"/></svg></div>
    <div class="app mini"><svg width="54" height="64" viewBox="0 0 54 64"><path d="M0 0h54v64H0z" fill="#fff"/><path d="M0 0h54v5H0z" fill="#d8e2ec"/><path d="M0 9h54v5H0z" fill="#272b33"/><path d="M4 16h16" stroke="#4d8de0"/><path d="M4 26h46M4 35h28M4 43h8M4 54h8M12 22h30" stroke="#aaa"/><path d="M4 48h14" stroke="#333" stroke-width="2"/></svg><svg class="mini-mark"><use href="#chrome-mark"/></svg></div>
    <div class="app mini"><svg width="64" height="40" viewBox="0 0 64 40"><path d="M0 0h64v40H0z" fill="#22241f"/><path d="M0 0h64v2H0z" fill="#15304a"/><path d="M0 38h64v2H0z" fill="#3a8fb8"/><path d="M3 5h8M3 9h9M3 13h6M18 12h5M18 15h4" stroke="#5f6a5a"/></svg><svg class="mini-mark"><use href="#code-mark"/></svg></div>
    <div class="app mini"><svg width="64" height="44" viewBox="0 0 64 44"><path d="M0 0h64v44H0z" fill="#22241f"/><path d="M0 0h64v2H0z" fill="#15304a"/><path d="M0 42h64v2H0z" fill="#3a8fb8"/><path d="M20 6v34" stroke="#8a3038" stroke-width="2" stroke-dasharray="5 2"/><path d="M3 5h8M3 9h9M3 13h6M24 8h12M24 12h9M24 22h10M24 28h8" stroke="#5f7a6a"/></svg><svg class="mini-mark"><use href="#code-mark"/></svg></div>
    <div class="app"><svg viewBox="0 0 56 64" class="tall"><path d="M5 9 10 3l8 2 8-4 8 4 8-2 8 7-3 8H8z" fill="#d9d9d6"/><path d="m14 8 6-3 3 6zM30 8l7-3 5 7-8 2z" fill="#4e4a48"/><path d="m24 7 5 1-1 5z" fill="#54a5c8"/><path d="M4 10q24 10 48 0l-6 49q-1 5-18 5t-18-5z" fill="#d9d6db"/><path d="M4 10q24 10 48 0" fill="none" stroke="#f6f6f6" stroke-width="2"/><path d="M12 24q10 8 20 0M16 44q10 8 22-2" fill="none" stroke="#efedf0" stroke-width="4"/></svg></div>
  </div>
</footer>
</body>
</html>
```
FILE: styles.css
```css
* { box-sizing: border-box; }

body {
  margin: 0;
  min-height: 100vh;
  position: relative;
  overflow: hidden;
  background: #180320;
  font-family: Inter, "Liberation Sans", sans-serif;
}

button { font-family: inherit; cursor: pointer; }
svg { display: block; flex: none; }

.wallpaper {
  position: absolute;
  inset: 0;
  width: 100%;
  height: 100%;
  z-index: -2;
}

.desktop-label {
  position: absolute;
  left: 18px;
  top: 1392px;
  margin: 0;
  z-index: -1;
  color: #f2f2f2;
  font-size: 24px;
  line-height: 30px;
  font-weight: 700;
}

/* Menu bar */
.menubar {
  display: flex;
  justify-content: space-between;
  align-items: center;
  height: 74px;
  padding: 0 34px 0 40px;
  color: #f3f4f5;
  font-size: 25px;
  background: linear-gradient(90deg, #72677b 0%, #736c7f 10%, #778090 22%, #7d8d95 32%, #7e9499 42%, #80999c 52%, #7f9fa0 65%, #829ea1 100%);
}

.menus { display: flex; align-items: center; gap: 42px; text-shadow: 0 3px 6px rgba(0, 0, 0, .3); }
.apple { width: 26px; height: 32px; }

.menu {
  padding: 0;
  border: 0;
  background: none;
  color: inherit;
  font-size: 25px;
  font-weight: 500;
  text-shadow: inherit;
}

.menu-app { font-weight: 700; }

.status { display: flex; align-items: center; gap: 37px; font-weight: 500; text-shadow: 0 3px 6px rgba(0, 0, 0, .3); }
.status svg { filter: drop-shadow(0 3px 3px rgba(0, 0, 0, .25)); }
.clock { white-space: nowrap; }

/* Browser window, running past the right screen edge */
.window {
  margin: 2px -58px 0 50px;
  border-radius: 20px;
  overflow: hidden;
  background: #fff;
  box-shadow: 0 0 20px rgba(0, 0, 0, .5);
}

.icon-button {
  display: flex;
  align-items: center;
  justify-content: center;
  flex: none;
  width: 40px;
  height: 40px;
  padding: 0;
  border: 0;
  background: none;
}

.tabstrip {
  display: flex;
  align-items: flex-end;
  height: 84px;
  background: #dfe1e5;
  box-shadow: inset 0 2px #f0eff2;
}

.lights { display: flex; align-items: center; align-self: flex-start; gap: 16px; height: 86px; padding: 0 40px 0 42px; }
.light { width: 24px; height: 24px; border-radius: 50%; }
.light-close { background: #ed6a5f; border: 1px solid #d5574c; }
.light-min { background: #f5bf4f; border: 1px solid #d9a23c; }
.light-max { background: #61c554; border: 1px solid #50a944; }

.tab {
  position: relative;
  display: flex;
  align-items: center;
  gap: 16px;
  width: 480px;
  height: 68px;
  padding: 0 20px 0 24px;
  border-radius: 16px 16px 0 0;
  background: #fff;
}

.tab::before, .tab::after {
  content: "";
  position: absolute;
  bottom: 0;
  width: 16px;
  height: 16px;
}

.tab::before { right: 100%; background: radial-gradient(circle at 0 0, transparent 15px, #fff 16px); }
.tab::after { left: 100%; background: radial-gradient(circle at 100% 0, transparent 15px, #fff 16px); }
.tab-title { flex: 1; color: #3c4043; font-size: 24px; }
.tab-close { width: 24px; height: 24px; }
.new-tab { margin: 0 0 14px 24px; }
.tab-search { margin: 0 26px 14px auto; }

.toolbar { display: flex; align-items: center; gap: 24px; padding: 8px 16px 0 24px; }

.omnibox {
  display: flex;
  align-items: center;
  flex: 1;
  height: 56px;
  padding: 0 18px 0 22px;
  border-radius: 28px;
  background: #f1f3f4;
}

.address {
  flex: 1;
  height: 40px;
  margin: 0 16px 0 18px;
  padding: 0;
  border: 0;
  outline: 0;
  font: 28px Inter, "Liberation Sans", sans-serif;
  color: transparent;
  background: linear-gradient(90deg, #202124 122px, #5f6368 122px) text;
}

.omnibox svg + svg { margin-left: 34px; }

.account { display: flex; align-items: center; gap: 14px; }

.avatar {
  width: 44px;
  height: 44px;
  border-radius: 50%;
  background: #1e4d40;
  color: #fff;
  font-size: 22px;
  line-height: 44px;
  text-align: center;
}

.update {
  width: 182px;
  height: 56px;
  padding: 0 24px;
  border: 3px solid #b63229;
  border-radius: 28px;
  background: #f8ecec;
  color: #b63229;
  font-size: 25px;
  font-weight: 500;
  text-align: left;
}

.bookmarks {
  display: flex;
  align-items: center;
  gap: 30px;
  height: 74px;
  padding: 0 36px 0 28px;
  border-bottom: 2px solid #dadce0;
  color: #3c4043;
  font-size: 24px;
}

.bookmark { display: flex; align-items: center; gap: 16px; color: inherit; text-decoration: none; white-space: nowrap; }
.more { width: 26px; margin-left: auto; justify-content: flex-start; }
.mark-2u { fill: #fff; font: 700 19px "Liberation Sans", sans-serif; }
.mark-ff { fill: #fff; font: 700 26px "Liberation Sans", sans-serif; }
.mark-c { fill: #111; font: italic 28px "Liberation Sans Narrow", "Liberation Sans", sans-serif; }
.mark-f { fill: #111; font: italic 700 30px "Liberation Sans", sans-serif; }

/* Restaurant page */
.page {
  display: grid;
  grid-template-columns: 902fr 1048fr;
  gap: 73px;
  padding: 0 487px 19px 522px;
  font-family: "DejaVu Sans", sans-serif;
}

.column { display: flex; flex-direction: column; gap: 24px; }

.card {
  padding: 24px;
  border-radius: 24px;
  background: #fdf2b5;
  text-align: center;
}

.card-tail { height: 16px; padding: 0; border-radius: 0 0 24px 24px; }
.starred { background: #503e4c; color: #fff; }
.starred-tail { padding-top: 15px; border-radius: 0 0 24px 24px; }

.name { margin: 0 0 10px; font-size: 32px; line-height: 40px; }

.heading {
  margin: 22px 0 18px;
  font-size: 37px;
  line-height: 46px;
  font-weight: 400;
  -webkit-text-stroke: 1px currentColor;
}

.actions { display: flex; justify-content: center; }

.btn {
  height: 43px;
  padding: 0 14px;
  border: 2px solid #767676;
  border-radius: 6px;
  background: #efefef;
  color: #000;
  font: 27px/36px "Liberation Sans", sans-serif;
}

.add { margin-top: 29px; text-align: center; }
.field { display: flex; justify-content: center; align-items: flex-start; font-size: 32px; line-height: 40px; }

.textbox {
  width: 294px;
  height: 43px;
  margin-left: 8px;
  border: 2px solid #767676;
  border-radius: 4px;
  background: #fff;
  font: 27px "Liberation Sans", sans-serif;
}

/* Dock */
.dock {
  display: flex;
  align-items: center;
  height: 90px;
  margin: 58px 55px 10px;
  padding: 0 3px;
  border: 2px solid rgba(255, 255, 255, .25);
  border-radius: 28px;
  background: linear-gradient(90deg, #675c70 0%, #6b5c72 12%, #805c86 17%, #8c6092 20%, #a0708e 25%, #9a7c9e 29%, #9c80a6 45%, #886a92 50%, #6c5c6c 54%, #74688a 60%, #8c6496 66%, #785f86 73%, #8c608e 78%, #8e6294 87%, #aa678c 93%, #7e5a84 98%, #80668a 100%);
}

.apps { display: flex; flex: 9; }
.apps-main { flex: 21; }

.app {
  position: relative;
  display: flex;
  align-items: center;
  justify-content: center;
  flex: 1;
  height: 66px;
  margin-top: -6px;
}

.app > svg { filter: drop-shadow(0 1px 1px rgba(0, 0, 0, .3)); }
.app:not(.mini) > svg { width: 56px; height: 56px; }
.app-round:not(.mini) > svg { width: 60px; height: 60px; }
.app > svg.tall { height: 62px; }

.open::after {
  content: "";
  position: absolute;
  bottom: -11px;
  left: 50%;
  width: 8px;
  height: 8px;
  margin-left: -4px;
  border-radius: 50%;
  background: #0a0010;
}

.badge {
  position: absolute;
  top: 0;
  right: 2px;
  min-width: 25px;
  height: 25px;
  padding: 0 4px;
  border-radius: 13px;
  background: #e8503f;
  color: #fff;
  font-size: 16px;
  line-height: 25px;
  text-align: center;
}

.mini-mark { position: absolute; right: 4px; bottom: 1px; width: 22px; height: 22px; }
.divider { flex: none; width: 2px; height: 66px; margin: 0 15px; background: #4a3550; }
.cal-month { fill: #fff; font: 600 13px Inter, sans-serif; }
.cal-day { fill: #222; font: 34px Inter, sans-serif; }
.tv-text { fill: #fff; font: 500 24px Inter, sans-serif; }
.note-text { fill: #fff; font: 700 17px "Open Sans", sans-serif; }
```
